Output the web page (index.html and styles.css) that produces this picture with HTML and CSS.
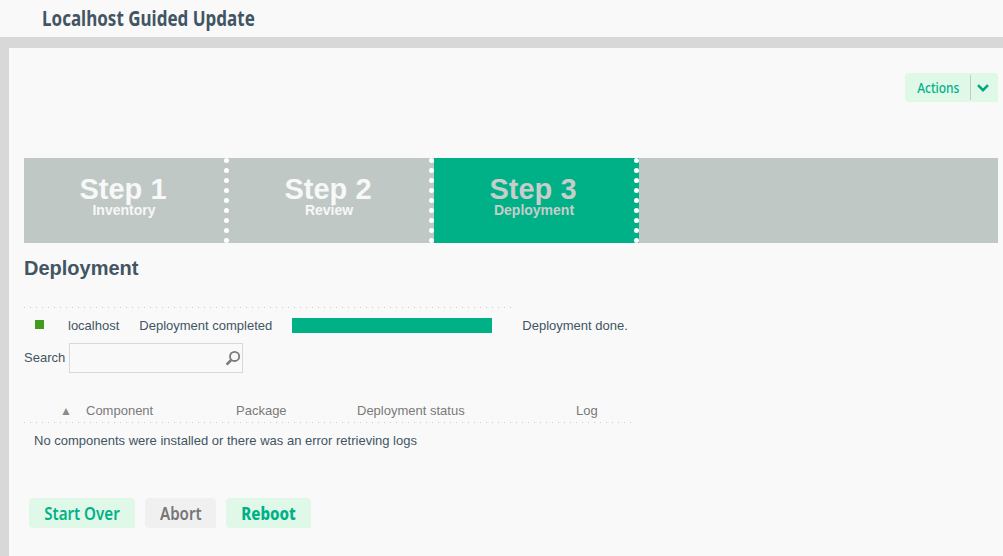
FILE: index.html
```html
<!DOCTYPE html>
<html>
<head>
    <title>Localhost Guided Update</title>
    <link rel="stylesheet" href="styles.css">
</head>
<body>
    <div class="page-header">
        <h1 class="page-title">Localhost Guided Update</h1>
    </div>
    <div class="page-body">
        <div class="actions-row">
            <div class="actions-btn">
                <span class="actions-label">Actions</span>
                <span class="actions-arrow">
                    <svg width="12" height="8" viewBox="0 0 12 8"><path d="M1 1.2 L6 6.2 L11 1.2" fill="none" stroke="#00a87f" stroke-width="2.6"/></svg>
                </span>
            </div>
        </div>
        <div class="steps">
            <div class="step">
                <div class="step-num">Step 1</div>
                <div class="step-name">Inventory</div>
            </div>
            <div class="step">
                <div class="step-num">Step 2</div>
                <div class="step-name">Review</div>
            </div>
            <div class="step active">
                <div class="step-num">Step 3</div>
                <div class="step-name">Deployment</div>
            </div>
        </div>
        <h2 class="section-title">Deployment</h2>
        <div class="host-row">
            <span class="host-status"></span>
            <span class="host-name">localhost</span>
            <span class="host-state">Deployment completed</span>
            <span class="host-bar"></span>
            <span class="host-msg">Deployment done.</span>
        </div>
        <div class="search-row">
            <label class="search-label" for="search">Search</label>
            <div class="search-box">
                <input type="text" id="search" class="search-input">
                <svg class="search-icon" width="16" height="16" viewBox="0 0 16 16"><circle cx="9.6" cy="6.4" r="4.6" fill="none" stroke="#7a7a7a" stroke-width="1.8"/><path d="M6.2 10 L1.6 14.6" stroke="#7a7a7a" stroke-width="2.6"/></svg>
            </div>
        </div>
        <div class="log-table">
            <div class="log-head">
                <span class="col-sort">&#9650;</span>
                <span class="col-component">Component</span>
                <span class="col-package">Package</span>
                <span class="col-status">Deployment status</span>
                <span class="col-log">Log</span>
            </div>
            <div class="log-empty">No components were installed or there was an error retrieving logs</div>
        </div>
        <div class="buttons">
            <button class="btn"><span class="btn-text">Start Over</span></button>
            <button class="btn btn-grey"><span class="btn-text">Abort</span></button>
            <button class="btn btn-bold"><span class="btn-text">Reboot</span></button>
        </div>
    </div>
</body>
</html>
```
FILE: styles.css
```css
* {
    box-sizing: border-box;
}
html, body {
    height: 100%;
}
body {
    margin: 0;
    overflow: hidden;
    background: #d8d8d8;
    color: #425563;
    font-family: "Liberation Sans", Arial, sans-serif;
    font-size: 13px;
}
.page-header {
    height: 37px;
    background: #f9f9f9;
    padding-left: 42px;
}
.page-title {
    margin: 0;
    width: 212px;
    font-family: "Noto Sans", sans-serif;
    font-size: 21px;
    line-height: 36px;
    font-weight: 700;
    white-space: nowrap;
    color: #425563;
    transform: scaleX(0.81);
    transform-origin: left center;
}
.page-body {
    height: 519px;
    margin-top: 11px;
    margin-left: 9px;
    background: #f9f9f9;
    padding: 25px 5px 0 15px;
}
.actions-row {
    display: flex;
    justify-content: flex-end;
}
.actions-btn {
    display: flex;
    align-items: center;
    width: 93px;
    height: 29px;
    background: #e0f8e8;
    border-radius: 4px 4px 0 4px;
}
.actions-label {
    width: 65px;
    margin-top: -2px;
    text-align: center;
    padding-left: 2px;
    color: #00b188;
    font-family: "Noto Sans", sans-serif;
    font-size: 15px;
    font-weight: 500;
    display: inline-block;
    transform: scaleX(0.8);
}
.actions-arrow {
    flex: 1;
    height: 25px;
    padding-right: 4px;
    border-left: 1px solid #c6c9c6;
    display: flex;
    align-items: center;
    justify-content: center;
}
.steps {
    display: flex;
    height: 85px;
    margin-top: 56px;
    background: #c0c8c6;
}
.step {
    width: 205px;
    padding-top: 15px;
    border-right: 5px dotted #fff;
    text-align: center;
    color: #f7f8f8;
    font-weight: bold;
}
.step.active {
    background: #00b188;
    color: #c6cdca;
}
.step-num {
    padding-right: 2px;
    font-size: 29px;
    line-height: 33px;
}
.step-name {
    font-size: 14px;
    line-height: 14px;
    margin-top: -3px;
}
.section-title {
    margin: 13px 0 0;
    font-size: 20px;
    line-height: 24px;
    font-weight: bold;
}
.host-row {
    display: flex;
    align-items: center;
    width: 487px;
    height: 36px;
    margin-top: 27px;
    padding-left: 11px;
    white-space: nowrap;
    background: repeating-linear-gradient(to right, #c8ccca 0 1px, transparent 1px 6px) top left / 100% 1px no-repeat;
}
.host-status {
    flex: none;
    width: 9px;
    height: 9px;
    background: #3f9c1f;
    margin-right: 24px;
    margin-top: -1px;
}
.host-state {
    margin-left: 20px;
}
.host-bar {
    flex: none;
    width: 200px;
    height: 15px;
    margin-left: 20px;
    background: #00b188;
}
.host-msg {
    margin-left: 30px;
}
.search-row {
    display: flex;
    align-items: center;
    gap: 4px;
}
.search-label {
    margin-top: -2px;
}
.search-box {
    position: relative;
    width: 174px;
    height: 30px;
    border: 1px solid #d8d8d8;
}
.search-input {
    width: 100%;
    height: 100%;
    border: none;
    background: none;
    outline: none;
}
.search-icon {
    position: absolute;
    top: 6px;
    right: 1px;
}
.log-table {
    width: 612px;
    margin-top: 28px;
}
.log-head {
    display: flex;
    align-items: center;
    height: 22px;
    padding-bottom: 4px;
    background: repeating-linear-gradient(to right, #c8ccca 0 1px, transparent 1px 6px) bottom left / 100% 1px no-repeat;
    color: #7a7a7a;
    white-space: nowrap;
}
.col-sort {
    width: 62px;
    padding-left: 36px;
    font-size: 12px;
    padding-top: 2px;
    color: #8a8a8a;
}
.col-component {
    width: 150px;
}
.col-package {
    width: 121px;
}
.col-status {
    width: 219px;
}
.log-empty {
    padding: 10px 0 0 10px;
}
.buttons {
    display: flex;
    gap: 10px;
    margin-top: 50px;
    padding-left: 5px;
}
.btn {
    height: 30px;
    padding: 0;
    border: none;
    border-radius: 4px 4px 0 4px;
    background: #e0f8e8;
    color: #00b188;
    font-family: "Noto Sans", sans-serif;
    font-size: 18px;
    font-weight: 600;
    width: 106px;
}
.btn-text {
    display: inline-block;
    transform: scaleX(0.84);
}
.btn-grey {
    width: 71px;
    background: #f0f0f0;
    color: #767676;
}
.btn-bold {
    width: 85px;
    font-weight: 800;
}
```
